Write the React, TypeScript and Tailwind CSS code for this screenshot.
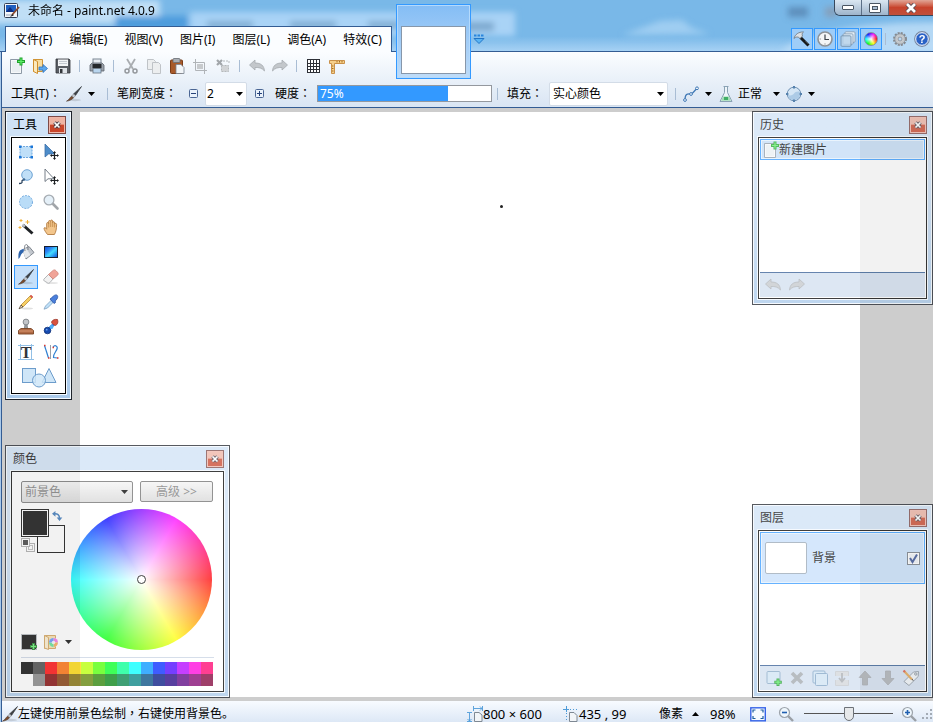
import { useState } from "react";
import type { ReactNode } from "react";

// ─── Icons ────────────────────────────────────────────────────────────────────

interface GlyphProps {
  children: ReactNode;
  className?: string;
}

function Glyph({ children, className = "size-4" }: GlyphProps) {
  return (
    <svg viewBox="0 0 16 16" className={`shrink-0 overflow-visible ${className}`} fill="none" aria-hidden="true">
      {children}
    </svg>
  );
}

const icons = {
  app: (
    <Glyph>
      <rect x=".5" y=".5" width="13" height="14" rx="1" fill="#f4f6fa" stroke="#333f55" />
      <rect x="2" y="2" width="10" height="7" fill="#1f5fc0" />
      <path d="M2 9l4-5 4 5z" fill="#0b2f86" />
      <path d="M2 12h8" stroke="#9aa6b8" />
      <path d="M15 4L8 12" stroke="#8b4a2c" strokeWidth="1.800" />
      <path d="M8.500 11L6 14l3.500-1.500z" fill="#222" />
    </Glyph>
  ),
  fileNew: (
    <Glyph>
      <path d="M1.500 1.500h11v14h-11z" fill="#f6f8fa" stroke="#8d99a6" />
      <path d="M3 3h8v11H3z" fill="#e9eef2" />
      <path d="M12 -.5v8M8 3.500h8" stroke="#1fa32c" strokeWidth="3" />
      <path d="M12 .5v6M9 3.500h6" stroke="#62ee6c" strokeWidth="1.200" />
    </Glyph>
  ),
  open: (
    <Glyph>
      <path d="M1.500 1.500h9v12h-9z" fill="#f7dca0" stroke="#d09435" />
      <path d="M1.500 1.500l4 2v12l-4-2z" fill="#fbe9bd" stroke="#cf8f2e" />
      <path d="M7 9h4V6.500l4.500 4-4.500 4V12H7z" fill="#5da7ec" stroke="#2c74c4" strokeWidth=".8" />
    </Glyph>
  ),
  save: (
    <Glyph>
      <path d="M1 1h13l1 1v13H1z" fill="#5a5e64" stroke="#33363a" strokeWidth=".8" />
      <rect x="3" y="1.500" width="10" height="6.500" fill="#f2f4f6" />
      <path d="M4 3.500h8M4 5.500h8" stroke="#c3c9d0" />
      <rect x="4" y="10" width="8" height="5" fill="#dfe3e8" />
      <rect x="5" y="11" width="2.500" height="4" fill="#33363a" />
    </Glyph>
  ),
  print: (
    <Glyph>
      <rect x="4" y="1" width="8" height="6" fill="#e8edf3" stroke="#7d8794" />
      <path d="M1 7l2-2h10l2 2v6H1z" fill="#9aa1aa" stroke="#5c636c" strokeWidth=".8" />
      <rect x="3.500" y="6" width="9" height="4" fill="#25282c" />
      <rect x="4" y="10.500" width="8" height="4.500" fill="#b9d5ee" stroke="#68737f" strokeWidth=".8" />
    </Glyph>
  ),
  cut: (
    <Glyph>
      <path d="M4 1l6 10M12 1L6 11" stroke="#a9adb1" strokeWidth="1.800" />
      <circle cx="4" cy="13" r="2" stroke="#94989c" strokeWidth="1.500" />
      <circle cx="12" cy="13" r="2" stroke="#94989c" strokeWidth="1.500" />
    </Glyph>
  ),
  copy: (
    <Glyph>
      <path d="M1.500 1.500h6l2 2v8h-8z" fill="#eceeef" stroke="#bfc3c7" />
      <path d="M6.500 4.500h6l2 2v9h-8z" fill="#eceeef" stroke="#bfc3c7" />
    </Glyph>
  ),
  paste: (
    <Glyph>
      <rect x="1.500" y="2" width="12" height="13.500" rx="1" fill="#a85a2a" stroke="#7a3c17" />
      <rect x="4" y=".5" width="7" height="4" rx="1" fill="#a9aeb4" stroke="#676c72" strokeWidth=".8" />
      <path d="M7 6.500h5l3 3v6H7z" fill="#f2f5f8" stroke="#78838f" strokeWidth=".8" />
    </Glyph>
  ),
  crop: (
    <Glyph>
      <path d="M3.500 1v11.500H15M1 4.500h11.500V16" stroke="#b0b4b8" />
      <rect x="5" y="6" width="6" height="5" fill="#c7cacd" />
    </Glyph>
  ),
  deselect: (
    <Glyph>
      <path d="M2 2l5 5M7 2L2 7" stroke="#a2a6aa" strokeWidth="2.200" />
      <rect x="6.500" y="7.500" width="7" height="6" fill="#d2d4d6" stroke="#b4b8bb" strokeDasharray="2 1" />
      <path d="M8 3h6v3" stroke="#b4b8bb" strokeDasharray="2 1" />
    </Glyph>
  ),
  undo: (
    <Glyph>
      <path d="M.5 7L6 2v3c6 0 9 2.500 9.500 8C13 10 10 9.300 6 9.500V12z" fill="#c3c7cb" stroke="#a6abb0" strokeWidth=".8" />
    </Glyph>
  ),
  redo: (
    <Glyph>
      <path d="M15.500 7L10 2v3C4 5 1 7.500.5 13 3 10 6 9.300 10 9.500V12z" fill="#c3c7cb" stroke="#a6abb0" strokeWidth=".8" />
    </Glyph>
  ),
  grid: (
    <Glyph>
      <rect x="1" y="2" width="13" height="13" fill="#fff" />
      <path d="M1.500 1.500v13M4.500 1.500v13M7.500 1.500v13M10.500 1.500v13M13.500 1.500v13M1 1.500h13M1 5.500h13M1 8.500h13M1 11.500h13M1 14.500h13" stroke="#2d3036" />
    </Glyph>
  ),
  ruler: (
    <Glyph>
      <path d="M.5 2.500h15v3H5.500v10h-3V5.500h-2z" fill="#f6cf8a" stroke="#c9914a" />
      <path d="M8 3v1.500M10.500 3v1.500M13 3v1.500M3 8h1.500M3 10.500h1.500M3 13h1.500" stroke="#a56f22" />
    </Glyph>
  ),
  brush: (
    <Glyph>
      <ellipse cx="9" cy="14" rx="6" ry="1.200" fill="#000" opacity=".12" />
      <path d="M15.500.5L9.500 9.500 7.500 8z" fill="#3a3d42" stroke="#3a3d42" strokeWidth=".7" />
      <path d="M7.500 8l2 1.600-2 2.200-2-1.500z" fill="#c4c9cf" stroke="#7d8288" strokeWidth=".6" />
      <path d="M5.500 10.300l2 1.500C5.500 14 3.500 14.700.5 15.200 2.800 14 3.500 12 5.500 10.300z" fill="#7b4a2b" stroke="#4d4037" strokeWidth=".6" />
    </Glyph>
  ),
  hammer: (
    <Glyph>
      <path d="M6.500 6.500l8 8" stroke="#17191b" strokeWidth="3" />
      <path d="M11.500 10l3 3" stroke="#6d7277" strokeWidth=".8" />
      <path d="M0 7.500C1 3.500 4.500 .8 9.500 1 8 2.200 7.800 3.200 8.500 5L6 7.500C4.500 5.500 2 5.500 0 7.500z" fill="#dde1e5" stroke="#6a727b" strokeWidth=".8" />
    </Glyph>
  ),
  clock: (
    <Glyph>
      <circle cx="8" cy="8" r="7" fill="#f4f5f6" stroke="#8d9298" strokeWidth="1.600" />
      <path d="M8 3.500V8.500h4" stroke="#3d4349" strokeWidth="1.200" />
      <path d="M8 12.500v1M2.700 8h1" stroke="#777" />
    </Glyph>
  ),
  layers: (
    <Glyph>
      <rect x="5" y=".8" width="10" height="10.500" rx="1" fill="#e7f0f8" stroke="#8298ad" strokeWidth=".8" />
      <rect x="3" y="2.800" width="10" height="10.500" rx="1" fill="#dce9f5" stroke="#8298ad" strokeWidth=".8" />
      <rect x="1" y="4.800" width="10" height="10.500" rx="1" fill="#b9d3ea" fillOpacity=".8" stroke="#6f8ba5" strokeWidth=".8" />
    </Glyph>
  ),
  gear: (
    <Glyph>
      <circle cx="8" cy="8" r="5.800" stroke="#85898f" strokeWidth="2.400" strokeDasharray="2 1.037" />
      <circle cx="8" cy="8" r="3.900" fill="#dadddf" stroke="#c3c7cb" strokeWidth="2.600" />
      <circle cx="8" cy="8" r="5.200" stroke="#85898f" strokeWidth=".6" />
      <circle cx="8" cy="8" r="2" fill="#b9d8f4" stroke="#85898f" strokeWidth=".8" />
    </Glyph>
  ),
  help: (
    <Glyph>
      <circle cx="8" cy="8" r="7.300" fill="#2a62c6" stroke="#7f8da2" strokeWidth="1.200" />
      <circle cx="8" cy="8" r="6.300" stroke="#fff" strokeWidth="1" />
      <text x="8" y="12" textAnchor="middle" fontSize="11" fontWeight="700" fill="#fff" fontFamily="Liberation Sans, sans-serif">
        ?
      </text>
    </Glyph>
  ),
  curve: (
    <Glyph>
      <path d="M2 14C2 5 7 9 9 7.500S12 4 14 2.500" stroke="#3f78b5" strokeWidth="1.300" />
      <circle cx="2" cy="14" r="1.400" fill="#fff" stroke="#3f78b5" />
      <circle cx="8" cy="8" r="1.400" fill="#fff" stroke="#3f78b5" />
      <circle cx="14" cy="2.300" r="1.400" fill="#fff" stroke="#3f78b5" />
    </Glyph>
  ),
  flask: (
    <Glyph>
      <path d="M5.500 .5h5M6.500 .5v6L2 15.500h12L9.500 6.500v-6" fill="#eef5fa" stroke="#8aa2b4" />
      <path d="M5 10.500h6l2 4.300H3z" fill="#9fdcb3" />
      <path d="M6 11h4v3H6z" fill="#3fae66" />
    </Glyph>
  ),
  roundShape: (
    <Glyph>
      <circle cx="8" cy="8" r="6.800" fill="#d5e6f5" stroke="#6c8fb2" />
      <path d="M2 9c3 1 5 0 6-1.500S12 5 14 6c1 5-2 8-6 8s-6-2-6-5z" fill="#adcbe6" />
      <path d="M8 0v2.400M8 13.600v2.400M0 8h2.400M13.600 8H16" stroke="#5682ad" strokeWidth="2" />
    </Glyph>
  ),
  rectSelect: (
    <Glyph>
      <rect x="2" y="2.500" width="12" height="11" fill="#bfdff8" stroke="#6fa8df" strokeDasharray="2 1" />
      <path d="M1 1.500h2.500v2.500H1zM12.500 1.500H15v2.500h-2.500zM1 12h2.500v2.500H1zM12.500 12H15v2.500h-2.500z" fill="#1b76d8" />
    </Glyph>
  ),
  movePixels: (
    <Glyph>
      <path d="M2 0v13l3.500-3h6.500z" fill="#4d8cc9" stroke="#3c70a8" strokeWidth=".8" />
      <path d="M11.500 8v7M8 11.500h7" stroke="#1c1f22" strokeWidth="1.200" />
      <path d="M11.500 7l1.500 2h-3zM11.500 16l1.500-2h-3zM7 11.500L9 10v3zM16 11.500L14 10v3z" fill="#1c1f22" />
    </Glyph>
  ),
  lasso: (
    <Glyph>
      <circle cx="9" cy="6" r="5.300" fill="#c0dff7" stroke="#6ea3d4" />
      <path d="M6 10.500c-1 1-2.500.5-2 2s-.5 2-3 2" stroke="#29425d" strokeWidth="1.300" />
      <circle cx="6" cy="10.500" r="1.200" fill="#3d6690" />
    </Glyph>
  ),
  moveSelection: (
    <Glyph>
      <path d="M2 0v12.500l3-2.700h6z" fill="#fff" stroke="#66707c" strokeWidth=".9" />
      <path d="M11.500 8v7M8 11.500h7" stroke="#1c1f22" strokeWidth="1.200" />
      <path d="M11.500 7l1.500 2h-3zM11.500 16l1.500-2h-3zM7 11.500L9 10v3zM16 11.500L14 10v3z" fill="#1c1f22" />
    </Glyph>
  ),
  ellipseSelect: (
    <Glyph>
      <circle cx="8" cy="8" r="6.500" fill="#b9dcf7" stroke="#74abdf" strokeDasharray="2 1.200" />
    </Glyph>
  ),
  zoom: (
    <Glyph>
      <path d="M9.500 9.500l5 5" stroke="#a1a5a9" strokeWidth="2.600" strokeLinecap="round" />
      <circle cx="6" cy="6" r="4.900" fill="#e5f0f8" stroke="#a6acb2" strokeWidth="1.300" />
    </Glyph>
  ),
  wand: (
    <Glyph>
      <path d="M5 6l9.500 8.500" stroke="#1f2225" strokeWidth="3" />
      <path d="M4.500 5.500L7 7.700" stroke="#b9bec4" strokeWidth="2.400" />
      <path d="M3 0v3M1.500 1.500h3M9.500 1v4M7.500 3h4M2 7v3M.500 8.500h3" stroke="#f0b23c" />
    </Glyph>
  ),
  hand: (
    <Glyph>
      <path
        d="M4.500 15.500C3 13.500 1 11 1 9c.8-.8 2 0 2.700 1.200V4.500c0-1.300 1.800-1.300 1.900 0V2.500c0-1.300 2-1.300 2 0V2c0-1.300 2-1.300 2 0v1.500c.2-1.200 2-1.100 2 .3V5c.4-1 2-.8 2 .5 0 4-.6 7.500-2.200 10z"
        fill="#f3c68c"
        stroke="#b37c42"
        strokeWidth=".9"
      />
      <path d="M5.700 4v4.500M7.700 3v5M9.700 3v5M11.600 5v3.500" stroke="#b9803f" strokeWidth=".7" />
    </Glyph>
  ),
  bucket: (
    <Glyph>
      <path d="M5 5.500l6-3 5 6-8 6.500z" fill="#c3c8ce" stroke="#757c84" strokeWidth=".9" />
      <path d="M4.500 6l3 8.500 5-3.500L8 4z" fill="#e6e9ec" />
      <path d="M7 7C6 2 7 .5 8.500.6S10 3 10 6" stroke="#7b8189" />
      <path d="M5.500 5C1 5.500 0 9 .5 15c1.800-1 2-4.500 3.500-5.500C5.500 8.700 6.500 6.500 5.500 5z" fill="#2d64ad" />
    </Glyph>
  ),
  gradient: (
    <Glyph>
      <defs>
        <linearGradient id="tool-gradient" x1="0" x2="1" y1="0" y2="1">
          <stop offset="0" stopColor="#0b45d8" />
          <stop offset=".35" stopColor="#2f8ff5" />
          <stop offset=".55" stopColor="#43dcff" />
          <stop offset="1" stopColor="#0b45d8" />
        </linearGradient>
      </defs>
      <rect x="1.500" y="2.500" width="13" height="11" fill="url(#tool-gradient)" stroke="#16202f" />
    </Glyph>
  ),
  eraser: (
    <Glyph>
      <ellipse cx="9" cy="14" rx="6" ry="1" fill="#000" opacity=".1" />
      <path d="M1 10l4.500-4.500 4.500 4.500-3 3.500c-1 1-2 1-3 0L1.300 12c-.7-.8-.8-1.300-.3-2z" fill="#f2f2f2" stroke="#a1a4a7" strokeWidth=".8" />
      <path d="M5.500 5.500L10 1.500c1-.9 2-.8 3 .2l1.500 1.600c.9 1 .9 2 0 3L10 10z" fill="#f0a498" stroke="#cf8378" strokeWidth=".8" />
    </Glyph>
  ),
  pencil: (
    <Glyph>
      <ellipse cx="9" cy="14.500" rx="6" ry="1" fill="#000" opacity=".12" />
      <path d="M3 11L12 2l2 2-9 9z" fill="#f7cf63" stroke="#b98b3a" strokeWidth=".8" />
      <path d="M12 2l1-1 2 2-1 1z" fill="#e85646" stroke="#c85a50" strokeWidth=".6" />
      <path d="M3 11l2 2-4 1.800z" fill="#f4dcb4" stroke="#3d3325" strokeWidth=".7" />
    </Glyph>
  ),
  picker: (
    <Glyph>
      <path d="M8.500 6l2 2-6 6-3.500 1.200L2.500 12z" fill="#bfe0f8" stroke="#7da1c1" strokeWidth=".8" />
      <path d="M7 5l1.500-1.200L10.500 2c3-2.500 5.500-.5 3.500 3l-1.800 2 .3 1.500-1.500 1z" fill="#4a7fdc" stroke="#2a53a3" strokeWidth=".8" />
    </Glyph>
  ),
  stamp: (
    <Glyph>
      <path d="M7 5h2l.6 5H6.400z" fill="#9a9ea3" stroke="#6a6e73" strokeWidth=".7" />
      <circle cx="8" cy="3" r="2.900" fill="#c3c6ca" stroke="#7e8287" strokeWidth=".9" />
      <path d="M3 9.500h10l2.500 2v3.500H.5v-3.500z" fill="#b06a45" stroke="#7b4423" strokeWidth=".9" />
      <path d="M1 12h14" stroke="#d99670" />
    </Glyph>
  ),
  recolor: (
    <Glyph>
      <path d="M5 11l6-6" stroke="#3c8ae8" strokeWidth="3" />
      <circle cx="4.500" cy="11.500" r="3.300" fill="#164bb0" stroke="#0d2f75" strokeWidth=".8" />
      <circle cx="8.500" cy="8" r="1.900" fill="#4fb0f7" />
      <path d="M8.500 3c1-2 3-3 6-2.500 1 3 0 5-2 6-2-.5-3.500-1.500-4-3.500z" fill="#d9533f" stroke="#9c3b2f" strokeWidth=".8" />
      <circle cx="3.700" cy="10.700" r=".9" fill="#6ca4f0" />
    </Glyph>
  ),
  text: (
    <Glyph>
      <path d="M2.500 0v16M13.500 0v16M0 1.500h16M0 15.500h16" stroke="#92c0e6" />
      <text x="8" y="14" textAnchor="middle" fontSize="16" fontWeight="700" fill="#33363a" fontFamily="Liberation Serif, serif">
        T
      </text>
    </Glyph>
  ),
  lineCurve: (
    <Glyph>
      <path d="M1.500 1.500l4 12.500" stroke="#2f80d2" strokeWidth="1.200" />
      <path d="M7.500 1v14" stroke="#98a0a8" />
      <path d="M10 3c2-2.500 5-1 4 2-.8 2.500-4 5-3.500 8.500l4 .5" stroke="#2f80d2" strokeWidth="1.200" />
      <path d="M1 1.500h1.500M5 14h1.500M9.500 3.500H11M14 14h1.500" stroke="#e0392e" strokeWidth="1.600" />
    </Glyph>
  ),
  shapes: (
    <svg viewBox="0 0 36 22" className="h-[22px] w-9" fill="#cfe6f8" stroke="#6c9ccb" aria-hidden="true">
      <rect x="1.500" y="1.500" width="13" height="14" />
      <path d="M28 1.500l7 14H21z" />
      <circle cx="18" cy="13.500" r="6.500" fillOpacity=".85" />
    </svg>
  ),
  addLayer: (
    <Glyph>
      <rect x="1" y="1.500" width="13" height="12" rx="1" fill="#cfe3f4" stroke="#86a7c5" />
      <path d="M12 8.500v7.500M8.300 12.200h7.500" stroke="#1d9a2a" strokeWidth="3" />
      <path d="M12 9.500v5.500M9.300 12.200h5.500" stroke="#5df06a" strokeWidth="1.200" />
    </Glyph>
  ),
  remove: (
    <Glyph>
      <path d="M3 3l10 10M13 3L3 13" stroke="#a1a7ad" strokeWidth="3.600" />
    </Glyph>
  ),
  duplicate: (
    <Glyph>
      <rect x="1" y="1" width="12" height="12" rx="1" fill="#cfe3f4" stroke="#7fa3c5" />
      <rect x="3.500" y="3.500" width="12" height="12" rx="1" fill="#cfe3f4" stroke="#7fa3c5" />
    </Glyph>
  ),
  merge: (
    <Glyph>
      <path d="M1.500 6V1.500h13V6M1.500 10v5.500h13V10" fill="#d2d6da" stroke="#c3c8cd" />
      <path d="M8 3v8M5 8l3 3.500L11 8" stroke="#a5aab0" strokeWidth="1.800" />
    </Glyph>
  ),
  up: (
    <Glyph>
      <path d="M8 1l6 6.500h-3.500V15h-5V7.500H2z" fill="#a7acb2" stroke="#9ca1a7" strokeWidth=".8" />
    </Glyph>
  ),
  down: (
    <Glyph>
      <path d="M8 15l6-6.500h-3.500V1h-5v7.500H2z" fill="#a7acb2" stroke="#9ca1a7" strokeWidth=".8" />
    </Glyph>
  ),
  props: (
    <Glyph>
      <path d="M1 11.500L10.500 2l5-.5-.3 5L6 15.500z" fill="#eef3f7" stroke="#7f8b97" strokeWidth=".9" />
      <circle cx="12.800" cy="4" r="1.200" stroke="#7f8b97" />
      <path d="M1 1l8 8.500" stroke="#e0a04a" strokeWidth="2.200" />
      <path d="M.5.5L2 2" stroke="#d8503f" strokeWidth="2.200" />
      <path d="M9 9l1.300 1.800" stroke="#333" />
    </Glyph>
  ),
  sizeInfo: (
    <Glyph>
      <path d="M6.500 0v5M15.500 0v5M7 2.500h8M13 .5l2 2-2 2M0 6.500h5M0 15.500h5M2.500 7v8M.5 13l2 2 2-2" stroke="#4e9bd8" strokeWidth=".9" />
      <path d="M7.500 6.500h4.500l3 2.500v6.500H7.500z" fill="#f2f5f8" stroke="#7e8893" />
    </Glyph>
  ),
  cursorInfo: (
    <Glyph>
      <path d="M3.500 0v6M0 3.500h6" stroke="#4e9bd8" />
      <path d="M7 3.500h9M3.500 7v9" stroke="#4e9bd8" strokeDasharray="1 2" />
      <path d="M6.500 6.500h4.500l3 3v6H6.500z" fill="#f2f5f8" stroke="#7e8893" />
    </Glyph>
  ),
  fit: (
    <Glyph>
      <rect x=".8" y="1.800" width="14.500" height="13" fill="#f6fbff" stroke="#3563e8" strokeWidth="1.400" />
      <path d="M3 6.500V4h2.500M10.500 4H13v2.500M13 10v2.500h-2.500M5.500 12.500H3V10" stroke="#1f5f9e" strokeWidth="1.200" />
    </Glyph>
  ),
  zoomOut: (
    <Glyph>
      <path d="M10 10l5 5" stroke="#9a9fa5" strokeWidth="2.400" />
      <circle cx="6.500" cy="6.500" r="5" fill="#eef6fc" stroke="#9ca3aa" strokeWidth="1.200" />
      <path d="M4 6.500h5" stroke="#1f5fb0" strokeWidth="1.600" />
    </Glyph>
  ),
  zoomIn: (
    <Glyph>
      <path d="M10 10l5 5" stroke="#9a9fa5" strokeWidth="2.400" />
      <circle cx="6.500" cy="6.500" r="5" fill="#eef6fc" stroke="#9ca3aa" strokeWidth="1.200" />
      <path d="M4 6.500h5M6.500 4v5" stroke="#1f5fb0" strokeWidth="1.600" />
    </Glyph>
  ),
  palette: (
    <Glyph>
      <path d="M1.500 1.500h11v13h-11z" fill="#f7dca6" stroke="#cf9c50" />
      <path d="M1.500 1.500l4 2v12l-4-1.500z" fill="#fbebc9" stroke="#cf9c50" />
      <circle cx="10.500" cy="8.500" r="4.500" fill="#e8f6ff" />
      <path d="M10.500 8.500V4a4.500 4.500 0 0 1 4.500 4.500z" fill="#f06ae0" />
      <path d="M10.500 8.500H15a4.500 4.500 0 0 1-4.500 4.500z" fill="#f4a34c" />
      <path d="M10.500 8.500V13A4.500 4.500 0 0 1 6 8.500z" fill="#57e08a" />
      <path d="M10.500 8.500H6A4.500 4.500 0 0 1 10.500 4z" fill="#5a8df5" />
      <circle cx="10.500" cy="8.500" r="1.800" fill="#fff" opacity=".8" />
    </Glyph>
  ),
  addColor: (
    <Glyph>
      <rect x=".5" y=".5" width="15" height="15" fill="#000" stroke="#aeb3b8" />
      <path d="M12.500 9v7M9 12.500h7" stroke="#127a1e" strokeWidth="3" />
      <path d="M12.500 10v5M10 12.500h5" stroke="#5df06a" strokeWidth="1.200" />
    </Glyph>
  ),
  swap: (
    <Glyph className="size-2.5">
      <path d="M3 4.500c6-1 9 2 9 7" stroke="#2f6fb5" strokeWidth="2.400" />
      <path d="M5.500 0v9L0 4.500zM7.500 10.500h9L12 16z" fill="#2f6fb5" />
    </Glyph>
  ),
};

type IconName = keyof typeof icons;

function Caret({ className = "" }: { className?: string }) {
  return (
    <svg viewBox="0 0 7 4" className={`h-1 w-[7px] shrink-0 ${className}`} aria-hidden="true">
      <path d="M0 0h7L3.500 4z" fill="#000" />
    </svg>
  );
}

function Divider({ className = "w-[11px]" }: { className?: string }) {
  return (
    <span className={`flex shrink-0 justify-center ${className}`}>
      <span className="h-3 w-px bg-[#a9bdd4]" />
    </span>
  );
}

/** Full-width punctuation set in the middle of its cell */
function Mark({ children }: { children: string }) {
  return (
    <span lang="zh-Hant" className="font-['Noto_Sans_CJK_TC',sans-serif] leading-4">
      {children}
    </span>
  );
}

// ─── Title bar and menu ───────────────────────────────────────────────────────

const menus = ["文件(F)", "编辑(E)", "视图(V)", "图片(I)", "图层(L)", "调色(A)", "特效(C)"];

const panelToggles: { label: string; icon: IconName | "wheel" }[] = [
  { label: "工具", icon: "hammer" },
  { label: "历史", icon: "clock" },
  { label: "图层", icon: "layers" },
  { label: "颜色", icon: "wheel" },
];

function Backdrop() {
  return (
    <svg
      viewBox="0 0 933 52"
      preserveAspectRatio="none"
      className="absolute inset-0 h-full w-full"
      aria-hidden="true"
    >
      <defs>
        <filter id="soft" x="-20%" y="-50%" width="140%" height="200%">
          <feGaussianBlur stdDeviation="3" />
        </filter>
      </defs>
      <g filter="url(#soft)">
        <rect x="-10" y="0" width="170" height="24" fill="#d8ecfb" opacity=".75" />
        <rect x="190" y="12" width="325" height="24" fill="#a9d3f6" />
        <rect x="115" y="16" width="73" height="14" fill="#4d9bdc" />
        <rect x="207" y="21" width="46" height="8" fill="#6f9cc4" opacity=".7" />
        <rect x="290" y="21" width="46" height="8" fill="#6f9cc4" opacity=".7" />
        <rect x="368" y="21" width="32" height="8" fill="#6f9cc4" opacity=".7" />
        <rect x="450" y="22" width="44" height="9" fill="#6f9cc4" opacity=".8" />
        <rect x="788" y="7" width="20" height="10" fill="#5584b0" opacity=".8" />
        <rect x="825" y="7" width="12" height="10" fill="#8d8f9c" opacity=".6" />
        <path d="M622 35l22-8 16-6 22-1 10 8 18 6z" fill="#a9d3f4" opacity=".8" />
        <path d="M780 52q40-30 160-30v30z" fill="#c3e0f8" opacity=".8" />
      </g>
    </svg>
  );
}

function TitleBar() {
  return (
    <header className="relative bg-gradient-to-b from-[#79b8e8] from-70% to-[#a9d3f5]">
      <Backdrop />
      <div className="relative flex h-[26px] items-start justify-between">
        <div className="flex items-center gap-2 pt-[3px] pl-1">
          {icons.app}
          <h1 className="leading-4">未命名 - paint.net 4.0.9</h1>
        </div>
        <div className="flex h-4 overflow-hidden rounded-bl-md border-b border-l border-[#37485c]">
          <button
            aria-label="最小化"
            className="flex w-[27px] items-center justify-center border-r border-[#5b6f86] bg-gradient-to-b from-[#dbe7f2] to-[#9db4cb]"
          >
            <span className="h-[5px] w-3 rounded-[1px] border border-[#4a5663] bg-white" />
          </button>
          <button
            aria-label="最大化"
            className="flex w-[27px] items-center justify-center border-r border-[#5b6f86] bg-gradient-to-b from-[#dbe7f2] to-[#9db4cb]"
          >
            <span className="flex h-[10px] w-3 items-center justify-center rounded-[1px] border border-[#4a5663] bg-white">
              <span className="h-1 w-1.5 border border-[#4a5663] bg-[#a9bdd2]" />
            </span>
          </button>
          <button
            aria-label="关闭"
            className="flex w-11 items-center justify-center bg-gradient-to-b from-[#e0a596] via-[#c7432c] to-[#c0503c]"
          >
            <svg viewBox="0 0 12 10" className="h-2.5 w-3" aria-hidden="true">
              <path d="M2 1l8 8M10 1L2 9" stroke="#5b4a52" strokeWidth="4.500" />
              <path d="M2 1l8 8M10 1L2 9" stroke="#fff" strokeWidth="2.700" />
            </svg>
          </button>
        </div>
      </div>

      <div className="relative flex h-[26px] items-stretch">
        <span className="w-[5px] border-b border-[#335c93]" />
        <nav
          aria-label="菜单"
          className="flex w-[387px] items-center justify-between border-x border-t border-[#335c93] bg-[#fbfdff] px-[9px]"
        >
          {menus.map((menu) => (
            <button key={menu} className="leading-4 whitespace-nowrap">
              {menu}
            </button>
          ))}
        </nav>
        <div className="flex flex-1 items-center justify-between border-b border-[#335c93]">
          <button aria-label="图片列表" className="ml-[81px]">
            <svg viewBox="0 0 12 10" className="h-2.5 w-3" aria-hidden="true">
              <path d="M1 1.500h10" stroke="#2a86dd" strokeWidth="2" strokeDasharray="2.500 1" />
              <path d="M1 4.500h10L6 9.500z" fill="#58b4f4" stroke="#2274c6" />
            </svg>
          </button>
          <div className="flex items-center">
            <div className="flex gap-px">
              {panelToggles.map(({ label, icon }) => (
                <button
                  key={label}
                  aria-label={label}
                  aria-pressed="true"
                  className="flex size-[22px] items-center justify-center border border-[#3399ff] bg-[#9fcdf8]"
                >
                  {icon === "wheel" ? (
                    <span className="size-3.5 rounded-full border border-[#7f8fa6] bg-[radial-gradient(closest-side,#fff,transparent),conic-gradient(from_90deg,#f00,#ff0,#0f0,#0ff,#00f,#f0f,#f00)]" />
                  ) : (
                    icons[icon]
                  )}
                </button>
              ))}
            </div>
            <Divider className="w-[7px]" />
            <button aria-label="设置" className="flex w-[22px] justify-center">
              {icons.gear}
            </button>
            <button aria-label="帮助" className="flex w-[22px] justify-center">
              {icons.help}
            </button>
          </div>
        </div>
      </div>

      {/* Thumbnail of the open image, hanging over the toolbar */}
      <button
        aria-label="未命名"
        className="absolute top-1 left-[396px] z-10 flex h-[75px] w-[75px] flex-col border border-[#3399ff] bg-gradient-to-b from-[#84bdf5] to-[#bfdcf8] px-1 pt-[21px] pb-1 shadow-[inset_0_0_0_1px_#b5dafc]"
      >
        <span className="w-full flex-1 border border-[#8797aa] bg-white" />
      </button>
    </header>
  );
}

// ─── Toolbars ─────────────────────────────────────────────────────────────────

const commands: { label: string; icon: IconName; divider?: boolean }[] = [
  { label: "新建", icon: "fileNew" },
  { label: "打开", icon: "open" },
  { label: "保存", icon: "save", divider: true },
  { label: "打印", icon: "print", divider: true },
  { label: "剪切", icon: "cut" },
  { label: "复制", icon: "copy" },
  { label: "粘贴", icon: "paste" },
  { label: "裁剪", icon: "crop" },
  { label: "取消选择", icon: "deselect", divider: true },
  { label: "撤销", icon: "undo" },
  { label: "重做", icon: "redo", divider: true },
  { label: "网格", icon: "grid" },
  { label: "标尺", icon: "ruler" },
];

function StepButton({ label, sign }: { label: string; sign: "+" | "-" }) {
  return (
    <button aria-label={label} className="flex w-6 justify-center">
      <svg viewBox="0 0 9 9" className="size-[9px]" fill="none" aria-hidden="true">
        <rect x=".5" y=".5" width="8" height="8" rx="1" fill="#eaf2fb" stroke="#4b6694" />
        <path d={sign === "+" ? "M2 4.500h5M4.500 2v5" : "M2 4.500h5"} stroke="#27437a" />
      </svg>
    </button>
  );
}

function Toolbar() {
  const [hardness, setHardness] = useState(75);

  return (
    <div className="border-b border-[#335c93] bg-gradient-to-b from-[#fbfdff] to-[#d9e5f3]">
      <div role="toolbar" aria-label="常用" className="flex h-7 items-center pl-[3px]">
        {commands.map(({ label, icon, divider }) => (
          <span key={label} className="flex items-center">
            <button aria-label={label} className="flex w-[23px] justify-center">
              {icons[icon]}
            </button>
            {divider && <Divider />}
          </span>
        ))}
      </div>

      <div role="toolbar" aria-label="工具选项" className="flex h-[27px] items-center pl-[9px] whitespace-nowrap">
        <span className="w-[55px]">
          工具(T)
          <Mark>：</Mark>
        </span>
        <button aria-label="选择工具" className="flex w-9 items-center gap-1.5">
          {icons.brush}
          <Caret />
        </button>
        <Divider />
        <label htmlFor="brush-width" className="ml-1 w-16">
          笔刷宽度<Mark>：</Mark>
        </label>
        <StepButton label="减小" sign="-" />
        <span className="relative flex h-6 w-[42px] items-center">
          <select id="brush-width" className="h-6 w-full appearance-none rounded-xs border border-[#d3dce7] bg-white pl-px">
            <option>2</option>
          </select>
          <Caret className="pointer-events-none absolute right-1" />
        </span>
        <StepButton label="增大" sign="+" />
        <label htmlFor="hardness" className="ml-1 w-[42px]">
          硬度<Mark>：</Mark>
        </label>
        <span className="relative flex h-[17px] w-[175px] items-center border border-[#94989e] bg-white">
          <span className="h-full bg-[#3399ff]" style={{ width: `${hardness}%` }} />
          <span className="absolute left-0.5 text-[12px] leading-4 text-white">{hardness}%</span>
          <input
            id="hardness"
            type="range"
            value={hardness}
            onChange={(e) => setHardness(Number(e.target.value))}
            className="absolute inset-0 opacity-0"
          />
        </span>
        <Divider />
        <label htmlFor="fill" className="ml-1 w-[42px]">
          填充<Mark>：</Mark>
        </label>
        <span className="relative flex h-6 w-[119px] items-center">
          <select id="fill" className="h-6 w-full appearance-none rounded-xs border border-[#d3dce7] bg-white pl-[3px]">
            <option>实心颜色</option>
          </select>
          <Caret className="pointer-events-none absolute right-1" />
        </span>
        <span className="w-0.5" />
        <Divider />
        <button aria-label="曲线类型" className="ml-0.5 flex items-center gap-1.5">
          {icons.curve}
          <Caret />
        </button>
        <button aria-label="混合模式" className="ml-1.5 flex items-center gap-1">
          {icons.flask}
          <span className="w-[31px] text-left">正常</span>
          <Caret />
        </button>
        <button aria-label="抗锯齿" className="ml-1.5 flex items-center gap-1.5">
          {icons.roundShape}
          <Caret />
        </button>
      </div>
    </div>
  );
}

// ─── Floating windows ─────────────────────────────────────────────────────────

interface PanelProps {
  title: string;
  children: ReactNode;
  className?: string;
}

function Panel({ title, children, className = "" }: PanelProps) {
  return (
    <section
      aria-label={title}
      className={`absolute flex flex-col border border-[#20242c] bg-gradient-to-b from-[#cfe2f6] from-30% to-[#a9c9ea] px-[5px] pb-[5px] shadow-[inset_0_0_0_1px_#f3f9ff] ${className}`}
    >
      <div className="flex h-[25px] shrink-0 items-center justify-between pl-0.5">
        <h2 className="leading-4">{title}</h2>
        <button
          aria-label={`关闭${title}`}
          className="flex size-[18px] items-center justify-center border border-[#7d4a48] bg-gradient-to-b from-[#eeb3a3] from-45% to-[#c8452b] to-50% shadow-[inset_0_0_0_1px_#efb6a9]"
        >
          <svg viewBox="0 0 8 8" className="size-2" aria-hidden="true">
            <path d="M1.500 1.500l5 5M6.500 1.500l-5 5" stroke="#4a3c46" strokeWidth="3.500" />
            <path d="M1.500 1.500l5 5M6.500 1.500l-5 5" stroke="#fff" strokeWidth="1.700" />
          </svg>
        </button>
      </div>
      <div className="flex min-h-0 flex-1 flex-col border border-black bg-white shadow-[0_0_0_1px_#f3f9ff]">
        {children}
      </div>
    </section>
  );
}

const tools: { label: string; icon: IconName }[] = [
  { label: "矩形选择", icon: "rectSelect" },
  { label: "移动像素", icon: "movePixels" },
  { label: "套索选择", icon: "lasso" },
  { label: "移动选区", icon: "moveSelection" },
  { label: "椭圆选择", icon: "ellipseSelect" },
  { label: "缩放", icon: "zoom" },
  { label: "魔棒", icon: "wand" },
  { label: "平移", icon: "hand" },
  { label: "油漆桶", icon: "bucket" },
  { label: "渐变", icon: "gradient" },
  { label: "画笔", icon: "brush" },
  { label: "橡皮擦", icon: "eraser" },
  { label: "铅笔", icon: "pencil" },
  { label: "取色器", icon: "picker" },
  { label: "图章", icon: "stamp" },
  { label: "重新着色", icon: "recolor" },
  { label: "文本", icon: "text" },
  { label: "直线/曲线", icon: "lineCurve" },
];

function ToolsPanel() {
  const [active, setActive] = useState("画笔");

  return (
    <Panel title="工具" className="top-[3px] left-[3px] w-[67px]">
      <div className="grid grid-cols-2 gap-px p-[2px]">
        {tools.map(({ label, icon }) => (
          <button
            key={label}
            aria-label={label}
            aria-pressed={label === active}
            onClick={() => setActive(label)}
            className={`flex h-6 items-center justify-center border ${
              label === active ? "border-[#3399ff] bg-[#c6e0fa]" : "border-transparent"
            }`}
          >
            {icons[icon]}
          </button>
        ))}
        <button aria-label="形状" className="col-span-2 flex h-[26px] items-center justify-center">
          {icons.shapes}
        </button>
      </div>
    </Panel>
  );
}

const palette = [
  ["#000000", "#404040", "#ff0000", "#ff6a00", "#ffd800", "#b6ff00", "#4cff00", "#00ff21", "#00ff90", "#00ffff", "#0094ff", "#0026ff", "#4800ff", "#b200ff", "#ff00dc", "#ff006e"],
  ["#ffffff", "#808080", "#7f0000", "#7f3300", "#7f6a00", "#5b7f00", "#267f00", "#007f0e", "#007f46", "#007f7f", "#004a7f", "#00137f", "#21007f", "#57007f", "#7f006e", "#7f0037"],
];

function ColorsPanel() {
  return (
    <Panel title="颜色" className="bottom-[3px] left-[3px] w-[225px] opacity-75">
      <div className="px-[9px] pt-[9px] pb-[5px]">
        <div className="flex gap-[7px]">
          <span className="relative flex h-[22px] w-28 items-center">
            <select
              aria-label="颜色目标"
              className="h-full w-full appearance-none rounded-xs border border-[#707070] bg-gradient-to-b from-[#f4f4f4] to-[#d8d8d8] pl-[3px] text-[#777]"
            >
              <option>前景色</option>
            </select>
            <Caret className="pointer-events-none absolute right-[5px]" />
          </span>
          <button className="h-[21px] w-[73px] rounded-xs border border-[#707070] bg-gradient-to-b from-[#f4f4f4] to-[#d8d8d8] text-[#777]">
            高级 &gt;&gt;
          </button>
        </div>

        <div className="mt-1.5 flex justify-between">
          <div className="flex w-[50px] flex-col justify-between">
            <div className="relative h-11">
              <button aria-label="背景色" className="absolute top-4 left-4 size-7 border border-black bg-white" />
              <button
                aria-label="前景色"
                className="absolute top-0 left-0 size-7 border border-black bg-black shadow-[inset_0_0_0_1px_#fff]"
              />
              <button aria-label="交换颜色" className="absolute top-0.5 left-[31px]">
                {icons.swap}
              </button>
              <button aria-label="默认颜色" className="absolute top-[29px] left-0">
                <svg viewBox="0 0 14 14" className="size-3.5" fill="none" aria-hidden="true">
                  <rect x="5.500" y="5.500" width="8" height="8" fill="#fff" stroke="#a5a5a5" />
                  <rect x="7.500" y="7.500" width="4" height="4" stroke="#b5b5b5" />
                  <rect x=".5" y=".5" width="8" height="8" fill="#fff" stroke="#a5a5a5" />
                  <rect x="2" y="2" width="5" height="5" fill="#333" />
                </svg>
              </button>
            </div>
            <div className="flex items-center gap-1.5">
              <button aria-label="添加颜色">{icons.addColor}</button>
              <button aria-label="调色板" className="flex items-center gap-1.5">
                {icons.palette}
                <Caret />
              </button>
            </div>
          </div>
          <div
            role="img"
            aria-label="色轮"
            className="mr-0.5 flex size-[141px] items-center justify-center rounded-full bg-[radial-gradient(closest-side,#fff,transparent),conic-gradient(from_90deg,#f00,#ff0,#0f0,#0ff,#00f,#f0f,#f00)]"
          >
            <span className="size-[9px] rounded-full border border-black bg-white" />
          </div>
        </div>

        <div className="mt-[7px] h-px bg-[#c9d3e3]" />
        <div className="mt-1 grid w-48 grid-cols-16">
          {palette.flat().map((color) => (
            <button key={color} aria-label={color} className="h-3" style={{ backgroundColor: color }} />
          ))}
        </div>
      </div>
    </Panel>
  );
}

function HistoryPanel() {
  return (
    <Panel title="历史" className="top-[3px] right-0 h-[194px] w-[181px] opacity-75">
      <ul className="flex-1 p-px">
        <li className="flex h-[21px] items-center border border-[#3399ff] bg-[#c3dcf6] pl-0.5 shadow-[inset_0_0_0_1px_#e4f1fd]">
          {icons.fileNew}
          <span>新建图片</span>
        </li>
      </ul>
      <div className="mx-px mb-px flex h-[25px] items-center gap-2 border-t border-[#335c93] bg-[#d2dff0] px-[5px]">
        <button aria-label="撤销">{icons.undo}</button>
        <button aria-label="重做">{icons.redo}</button>
      </div>
    </Panel>
  );
}

const layerActions: { label: string; icon: IconName }[] = [
  { label: "添加图层", icon: "addLayer" },
  { label: "删除图层", icon: "remove" },
  { label: "复制图层", icon: "duplicate" },
  { label: "向下合并", icon: "merge" },
  { label: "上移图层", icon: "up" },
  { label: "下移图层", icon: "down" },
  { label: "图层属性", icon: "props" },
];

function LayersPanel() {
  const [visible, setVisible] = useState(true);

  return (
    <Panel title="图层" className="right-0 bottom-[3px] h-[194px] w-[181px] opacity-75">
      <ul className="flex-1 p-px">
        <li className="flex h-[52px] items-center gap-[5px] border border-[#3399ff] bg-[#c7e0fb] px-1 shadow-[inset_0_0_0_1px_#e4f1fd]">
          <span className="h-8 w-[42px] rounded-xs border border-[#98a6b5] bg-white" />
          <label htmlFor="layer-visible" className="flex-1">
            背景
          </label>
          <span className="relative flex">
            <input
              id="layer-visible"
              type="checkbox"
              checked={visible}
              onChange={(e) => setVisible(e.target.checked)}
              className="size-[13px] appearance-none border border-[#6f7780] bg-[#eef2f6] shadow-[inset_0_0_0_1px_#fff]"
            />
            {visible && (
              <svg viewBox="0 0 13 13" className="pointer-events-none absolute inset-0" fill="none" aria-hidden="true">
                <path d="M3 6l2.500 4L10 2.500" stroke="#2f4a8f" strokeWidth="2" />
              </svg>
            )}
          </span>
        </li>
      </ul>
      <div className="mx-px mb-px flex h-[25px] items-center justify-between border-t border-[#335c93] bg-[#d2dff0] px-[6px]">
        {layerActions.map(({ label, icon }) => (
          <button key={label} aria-label={label}>
            {icons[icon]}
          </button>
        ))}
      </div>
    </Panel>
  );
}

// ─── Status bar ───────────────────────────────────────────────────────────────

function StatusBar() {
  const [zoom, setZoom] = useState(50);

  return (
    <footer className="flex h-[21px] shrink-0 items-center bg-gradient-to-b from-[#f8fbff] to-[#dde8f6] pt-1 whitespace-nowrap">
      <div className="flex flex-1 items-center">
        {icons.brush}
        <span>
          左键使用前景色绘制<Mark>，</Mark>右键使用背景色。
        </span>
      </div>
      <div className="flex w-24 items-center">
        {icons.sizeInfo}
        <span className="text-[13px] leading-4">800 × 600</span>
      </div>
      <div className="flex w-24 items-center">
        {icons.cursorInfo}
        <span className="text-[13px] leading-4">435 , 99</span>
      </div>
      <button className="flex w-[51px] items-center gap-[9px]">
        像素
        <Caret className="rotate-180" />
      </button>
      <span className="w-10 text-[13px] leading-4">98%</span>
      <button aria-label="适合窗口" className="w-7">
        {icons.fit}
      </button>
      <button aria-label="缩小">{icons.zoomOut}</button>
      <input
        type="range"
        aria-label="缩放"
        value={zoom}
        onChange={(e) => setZoom(Number(e.target.value))}
        className="mr-2 ml-2.5 h-4 w-[89px] appearance-none bg-[linear-gradient(#555,#555)] bg-[length:100%_1px] bg-center bg-no-repeat [&::-webkit-slider-thumb]:h-3.5 [&::-webkit-slider-thumb]:w-2.5 [&::-webkit-slider-thumb]:appearance-none [&::-webkit-slider-thumb]:rounded-b-[5px] [&::-webkit-slider-thumb]:border [&::-webkit-slider-thumb]:border-[#6d7278] [&::-webkit-slider-thumb]:bg-[#e6e8ea]"
      />
      <button aria-label="放大">{icons.zoomIn}</button>
      <svg viewBox="0 0 12 12" className="ml-1 size-3" fill="#a3abb5" aria-hidden="true">
        <path d="M9 1h2v2H9zM5 5h2v2H5zM9 5h2v2H9zM1 9h2v2H1zM5 9h2v2H5zM9 9h2v2H9z" />
      </svg>
    </footer>
  );
}

// ─── App ──────────────────────────────────────────────────────────────────────

export default function App() {
  return (
    <div className="flex h-screen min-h-[600px] flex-col overflow-hidden bg-[#a9c9ea] font-['Noto_Sans','Noto_Sans_CJK_SC',sans-serif] text-[12px] text-black">
      <TitleBar />
      <div className="ml-px flex min-h-0 flex-1 flex-col border-l border-[#335c93]">
        <Toolbar />
        <main className="relative flex min-h-0 flex-1 bg-[#cdcdcd] py-1 pr-[73px] pl-[78px]">
          <div className="relative flex-1 bg-white">
            <span className="absolute top-[93px] left-[420px] size-[3px] rounded-full bg-[#222]" />
          </div>
          <ToolsPanel />
          <ColorsPanel />
          <HistoryPanel />
          <LayersPanel />
        </main>
        <StatusBar />
      </div>
    </div>
  );
}
